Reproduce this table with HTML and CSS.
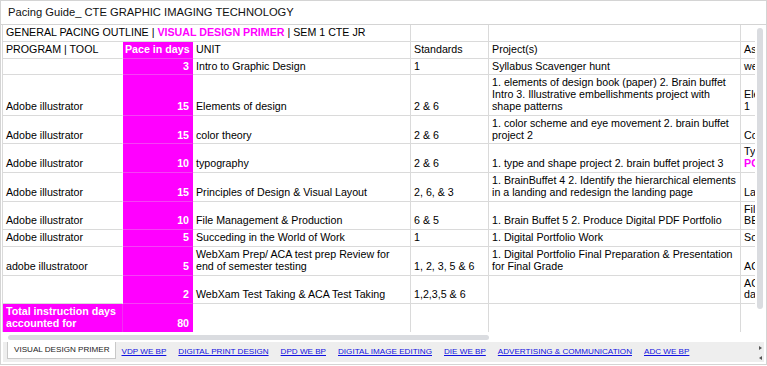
FILE: index.html
```html
<!DOCTYPE html>
<html>
<head>
<meta charset="utf-8">
<title>Pacing Guide</title>
<link rel="stylesheet" href="styles.css">
</head>
<body>
<div class="frame">
  <div class="title">Pacing Guide_ CTE GRAPHIC IMAGING TECHNOLOGY</div>
  <div class="sheet">
    <div class="viewport">
      <table class="grid">
        <colgroup>
          <col class="w1"><col class="w2"><col class="w3"><col class="w4"><col class="w5"><col class="w6">
        </colgroup>
        <tr class="first">
          <td colspan="3">GENERAL PACING OUTLINE | <b class="pink">VISUAL DESIGN PRIMER</b> | SEM 1 CTE JR</td>
          <td></td><td></td><td></td>
        </tr>
        <tr>
          <td class="c1">PROGRAM | TOOL</td>
          <td class="pace hd">Pace in days</td>
          <td>UNIT</td><td>Standards</td><td>Project(s)</td><td>Assessment(s)</td>
        </tr>
        <tr>
          <td class="c1"></td><td class="pace">3</td>
          <td>Intro to Graphic Design</td><td>1</td><td>Syllabus Scavenger hunt</td><td>week 1 quiz</td>
        </tr>
        <tr>
          <td class="c1">Adobe illustrator</td><td class="pace">15</td>
          <td>Elements of design</td><td>2 &amp; 6</td>
          <td>1. elements of design book (paper) 2. Brain buffet<br>Intro 3. Illustrative embellishments project with<br>shape patterns</td>
          <td>Elements of Design Quiz<br>1</td>
        </tr>
        <tr>
          <td class="c1">Adobe illustrator</td><td class="pace">15</td>
          <td>color theory</td><td>2 &amp; 6</td>
          <td>1. color scheme and eye movement 2. brain buffet<br>project 2</td>
          <td>Color theory quiz</td>
        </tr>
        <tr>
          <td class="c1">Adobe illustrator</td><td class="pace">10</td>
          <td>typography</td><td>2 &amp; 6</td>
          <td>1. type and shape project 2. brain buffet project 3</td>
          <td>Typography Quiz<br><b class="pink">POSTER</b></td>
        </tr>
        <tr>
          <td class="c1">Adobe illustrator</td><td class="pace">15</td>
          <td>Principles of Design &amp; Visual Layout</td><td>2, 6, &amp; 3</td>
          <td>1. BrainBuffet 4 2. Identify the hierarchical elements<br>in a landing and redesign the landing page</td>
          <td>Layout quiz</td>
        </tr>
        <tr>
          <td class="c1">Adobe illustrator</td><td class="pace">10</td>
          <td>File Management &amp; Production</td><td>6 &amp; 5</td>
          <td>1. Brain Buffet 5 2. Produce Digital PDF Portfolio</td>
          <td>File management quiz<br>BEST PRACTICES</td>
        </tr>
        <tr>
          <td class="c1">Adobe illustrator</td><td class="pace">5</td>
          <td>Succeding in the World of Work</td><td>1</td>
          <td>1. Digital Portfolio Work</td>
          <td>Soft skills quiz</td>
        </tr>
        <tr>
          <td class="c1">adobe illustratoor</td><td class="pace">5</td>
          <td>WebXam Prep/ ACA test prep Review for<br>end of semester testing</td><td>1, 2, 3, 5 &amp; 6</td>
          <td>1. Digital Portfolio Final Preparation &amp; Presentation<br>for Final Grade</td>
          <td>ACA practice exam</td>
        </tr>
        <tr>
          <td class="c1"></td><td class="pace">2</td>
          <td>WebXam Test Taking &amp; ACA Test Taking</td><td>1,2,3,5 &amp; 6</td>
          <td></td>
          <td>ACA certification<br>date TBD</td>
        </tr>
        <tr class="last">
          <td class="c1 total">Total instruction days<br>accounted for</td><td class="pace">80</td>
          <td></td><td></td><td></td><td></td>
        </tr>
      </table>
    </div>
    <div class="vscroll"><div class="vthumb"></div></div>
  </div>
  <div class="hscroll"><div class="hthumb"></div></div>
  <div class="tabs">
    <ul class="tablist">
      <li class="tab active">VISUAL DESIGN PRIMER</li>
      <li class="tab"><a href="#">VDP WE BP</a></li>
      <li class="tab"><a href="#">DIGITAL PRINT DESIGN</a></li>
      <li class="tab"><a href="#">DPD WE BP</a></li>
      <li class="tab"><a href="#">DIGITAL IMAGE EDITING</a></li>
      <li class="tab"><a href="#">DIE WE BP</a></li>
      <li class="tab"><a href="#">ADVERTISING &amp; COMMUNICATION</a></li>
      <li class="tab"><a href="#">ADC WE BP</a></li>
    </ul>
    <div class="arrows"><span class="arr arr-right"></span><span class="arr arr-left"></span></div>
  </div>
</div>
</body>
</html>
```

FILE: styles.css
```css
* { box-sizing: border-box; }
html, body { margin: 0; background: #fff; }
body { font-family: "Liberation Sans", Arial, sans-serif; color: #000; }

.frame {
  width: 767px;
  border: 1px solid #d4d4d4;
  padding-bottom: 2px;
}

.title {
  height: 24px;
  border-bottom: 1px solid #d4d4d4;
  padding-left: 7px;
  font-size: 11.2px;
  line-height: 23px;
  color: #111;
  white-space: nowrap;
}

.sheet { display: flex; }
.viewport { width: 754px; overflow: hidden; }

.grid {
  table-layout: fixed;
  border-collapse: separate;
  border-spacing: 0;
  width: 854px;
  margin-left: 1px;
  border-left: 1px solid #dadada;
  font-size: 10.667px;
  line-height: 11.8px;
}
.w1 { width: 120px; }
.w2 { width: 70px; }
.w3 { width: 218px; }
.w4 { width: 78px; }
.w5 { width: 252px; }
.w6 { width: 115px; }

.grid td {
  padding: 2px 3px;
  border-right: 1px solid #dadada;
  border-bottom: 1px solid #dadada;
  vertical-align: bottom;
  white-space: nowrap;
  overflow: hidden;
}
.grid td.c1 { border-right-color: transparent; }
.grid td.pace {
  background: #ff00ff;
  color: #fff;
  font-weight: bold;
  text-align: right;
  border-right-color: #ff00ff;
  border-bottom-color: #f541f5;
}
.grid td.pace.hd { text-align: left; padding-left: 2px; }
.grid td.total {
  background: #ff00ff;
  color: #fff;
  font-weight: bold;
  border-right-color: #f030f0;
}
.grid tr.last td { border-bottom: none; }

.pink { color: #ff00ff; font-weight: bold; }

.vscroll { width: 11px; padding: 3px 0 0 2px; }
.vthumb { width: 6px; height: 281px; background: #dadce0; border-radius: 3px; }

.hscroll { margin-top: 3px; height: 5px; padding-left: 7px; }
.hthumb { width: 481px; height: 5px; background: #dadce0; border-radius: 3px; }

.tabs {
  display: flex;
  height: 20px;
  margin: 2px 2px 0 2px;
  background: #eeeeee;
  padding-right: 1px;
}
.tablist {
  display: flex;
  align-items: flex-start;
  list-style: none;
  margin: 0;
  padding: 0 0 0 4px;
  font-size: 8.1px;
}
.tab { line-height: 20px; margin: 0 6px; white-space: nowrap; }
.tab a { color: #1010e0; text-decoration: underline; }
.tab.active {
  margin: 0;
  background: #fff;
  border: 1px solid #c8c8c8;
  border-top: none;
  padding: 0 5px 0 6px;
  height: 17px;
  line-height: 16px;
  color: #222;
}
.arrows {
  margin-left: auto;
  width: 5px;
  display: flex;
  flex-direction: column;
  justify-content: space-between;
  align-items: center;
  padding: 4px 0 2px;
}
.arr { width: 0; height: 0; border-top: 2px solid transparent; border-bottom: 2px solid transparent; }
.arr-right { border-left: 3px solid #555; }
.arr-left { border-right: 3px solid #555; }
```
